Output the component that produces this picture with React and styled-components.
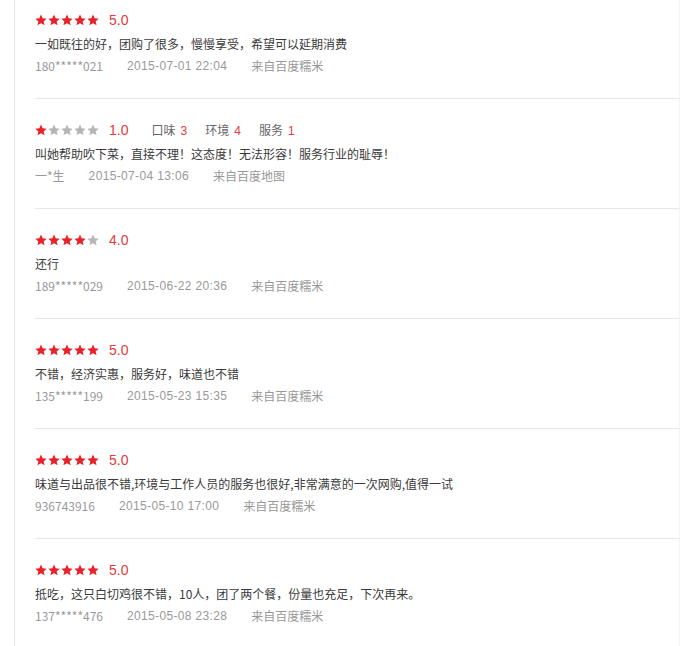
import React from "react";
import styled, { createGlobalStyle } from "styled-components";

const Global = createGlobalStyle`
  html, body { margin: 0; padding: 0; background: #fff; }
  body { font-family: "Liberation Sans", "Noto Sans CJK SC", sans-serif; }
`;

const Page = styled.div`
  padding-left: 14px;
  width: 665px;
  height: 646px;
  overflow: hidden;
  border-right: 1px solid #f3f3f3;
`;

const Panel = styled.div`
  width: 657px;
  min-height: 646px;
  border-left: 1px solid #e6e6e6;
  border-right: 1px solid #e6e6e6;
  padding: 0 18px 0 20px;
  box-sizing: content-box;
`;

const Item = styled.div`
  padding: 24px 0 22px;
  border-bottom: 1px solid #e8e8e8;
  &:first-child { padding-top: 13px; }
`;

const RateRow = styled.div`
  display: flex;
  align-items: center;
  height: 14px;
`;

const Stars = styled.div`
  display: flex;
  gap: 1px;
  margin-right: 10px;
`;

const Score = styled.span`
  font-size: 14px;
  color: #e4393c;
  line-height: 14px;
  margin-right: 3px;
`;

const Sub = styled.span`
  margin-left: 20px;
  font-size: 12px;
  color: #666;
  font-family: "Noto Sans CJK SC", sans-serif;
  line-height: 14px;
  & + & { margin-left: 18px; }
`;

const SubNum = styled.span`
  margin-left: 5px;
  color: #e4393c;
  font-family: "Liberation Sans", sans-serif;
`;

const Content = styled.div`
  margin-top: 7px;
  font-size: 12px;
  line-height: 20px;
  color: #3a3a3a;
  font-family: "Noto Sans CJK SC", sans-serif;
`;

const Meta = styled.div`
  margin-top: 2px;
  display: flex;
  gap: 24px;
  font-size: 12px;
  line-height: 20px;
  color: #999;
`;

const MetaCn = styled.span`
  font-family: "Noto Sans CJK SC", sans-serif;
`;

const MetaDate = styled.span`
  letter-spacing: 0.35px;
`;

const Star = ({ on }) => (
  <svg width="12" height="12" viewBox="0 0 24 24">
    <path
      d="M12 1.2l3.3 7.4 8 .8-6 5.4 1.8 7.9L12 18.6l-7.1 4.1 1.8-7.9-6-5.4 8-.8z"
      fill={on ? "#e8222a" : "#b5b5b5"}
    />
  </svg>
);

const reviews = [
  { s: 5, score: "5.0", text: "一如既往的好，团购了很多，慢慢享受，希望可以延期消费", user: "180*****021", date: "2015-07-01 22:04", src: "来自百度糯米" },
  { s: 1, score: "1.0", subs: [["口味", 3], ["环境", 4], ["服务", 1]], text: "叫她帮助吹下菜，直接不理！这态度！无法形容！服务行业的耻辱！", user: "一*生", date: "2015-07-04 13:06", src: "来自百度地图" },
  { s: 4, score: "4.0", text: "还行", user: "189*****029", date: "2015-06-22 20:36", src: "来自百度糯米" },
  { s: 5, score: "5.0", text: "不错，经济实惠，服务好，味道也不错", user: "135*****199", date: "2015-05-23 15:35", src: "来自百度糯米" },
  { s: 5, score: "5.0", text: "味道与出品很不错,环境与工作人员的服务也很好,非常满意的一次网购,值得一试", user: "936743916", date: "2015-05-10 17:00", src: "来自百度糯米" },
  { s: 5, score: "5.0", text: "抵吃，这只白切鸡很不错，10人，团了两个餐，份量也充足，下次再来。", user: "137*****476", date: "2015-05-08 23:28", src: "来自百度糯米" },
];

export default function App() {
  return (
    <>
      <Global />
      <Page>
        <Panel>
          {reviews.map((r, i) => (
            <Item key={i}>
              <RateRow>
                <Stars>
                  {[0, 1, 2, 3, 4].map((k) => (
                    <Star key={k} on={k < r.s} />
                  ))}
                </Stars>
                <Score>{r.score}</Score>
                {r.subs &&
                  r.subs.map(([n, v]) => (
                    <Sub key={n}>
                      {n}
                      <SubNum>{v}</SubNum>
                    </Sub>
                  ))}
              </RateRow>
              <Content>{r.text}</Content>
              <Meta>
                <MetaCn>{r.user}</MetaCn>
                <MetaDate>{r.date}</MetaDate>
                <MetaCn>{r.src}</MetaCn>
              </Meta>
            </Item>
          ))}
        </Panel>
      </Page>
    </>
  );
}
